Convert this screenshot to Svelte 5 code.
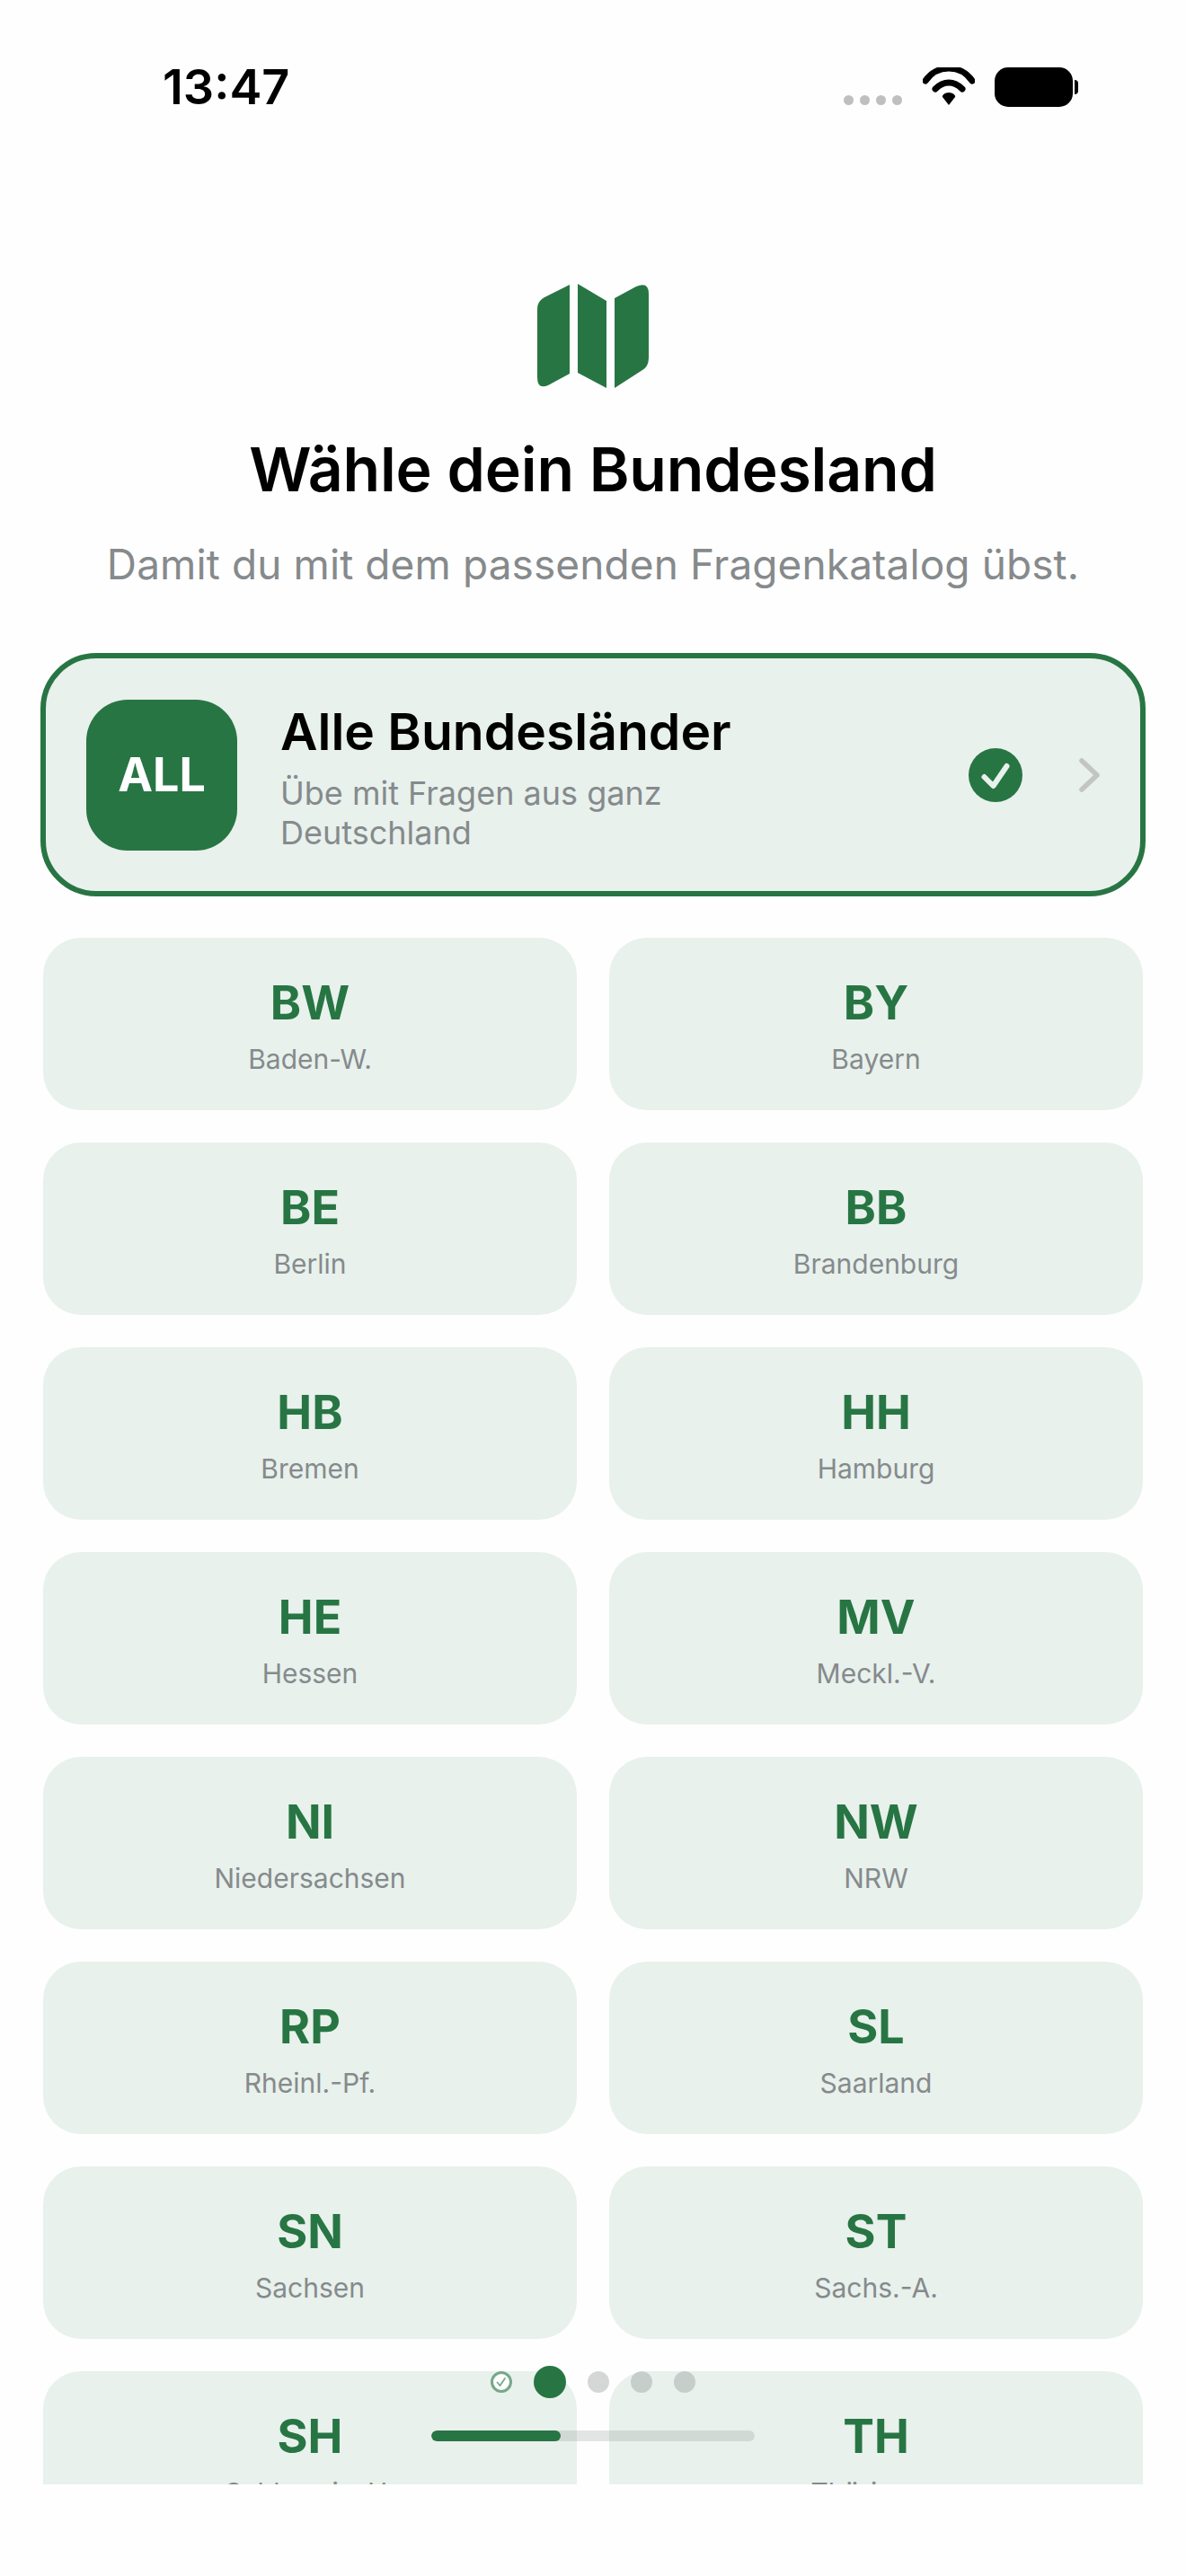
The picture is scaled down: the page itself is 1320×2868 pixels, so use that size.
<script lang="ts">
	const states = [
		['BW', 'Baden-W.'],
		['BY', 'Bayern'],
		['BE', 'Berlin'],
		['BB', 'Brandenburg'],
		['HB', 'Bremen'],
		['HH', 'Hamburg'],
		['HE', 'Hessen'],
		['MV', 'Meckl.-V.'],
		['NI', 'Niedersachsen'],
		['NW', 'NRW'],
		['RP', 'Rheinl.-Pf.'],
		['SL', 'Saarland'],
		['SN', 'Sachsen'],
		['ST', 'Sachs.-A.'],
		['SH', 'Schleswig-H.'],
		['TH', 'Thüringen']
	];
</script>

<div class="screen">
	<div class="status">
		<span class="time">13:47</span>
		<div class="status-icons">
			<div class="signal"><i></i><i></i><i></i><i></i></div>
			<svg class="wifi" viewBox="0 0 58 42" width="58" height="42">
				<path d="M3 15C9 6 19 1 29 1s20 5 26 14" fill="none" stroke="#000" stroke-width="7" stroke-linecap="round" />
				<path d="M14 24c4-4 9-7 15-7s11 3 15 7" fill="none" stroke="#000" stroke-width="7" stroke-linecap="round" />
				<path d="M29 42l-7-9c-1-2 3-5 7-5s8 3 7 5z" fill="#000" />
			</svg>
			<div class="battery"></div>
		</div>
	</div>

	<div class="scroll">
		<header>
			<svg class="map" viewBox="0 0 124 116" width="124" height="116">
				<path d="M36 1V100L12 113Q0 118 0 104V28Q0 19 8 15Z" fill="#287544" />
				<path d="M45 0L77 19V116L45 99Z" fill="#287544" />
				<path d="M86 16L110 3Q124 -3 124 11V82Q124 92 117 96L86 116Z" fill="#287544" />
			</svg>
			<h1>Wähle dein Bundesland</h1>
			<p>Damit du mit dem passenden Fragenkatalog übst.</p>
		</header>

		<div class="all">
			<div class="all-badge">ALL</div>
			<div class="all-text">
				<h2>Alle Bundesländer</h2>
				<span>Übe mit Fragen aus ganz Deutschland</span>
			</div>
			<svg class="check" viewBox="0 0 60 60" width="60" height="60">
				<circle cx="30" cy="30" r="30" fill="#287544" />
				<path d="M17.5 32L27.5 42L42.5 20" fill="none" stroke="#e8f1ec" stroke-width="6" stroke-linecap="round" stroke-linejoin="round" />
			</svg>
			<svg class="chevron" viewBox="0 0 24 38" width="24" height="38">
				<path d="M3 3l17 16L3 35" fill="none" stroke="#c2c5c4" stroke-width="5.5" stroke-linecap="round" stroke-linejoin="round" />
			</svg>
		</div>

		<div class="grid">
			{#each states as [code, name]}
				<div class="card">
					<strong>{code}</strong>
					<span>{name}</span>
				</div>
			{/each}
		</div>
	</div>

	<div class="progress">
		<div class="dots">
			<svg viewBox="0 0 24 24" width="24" height="24">
				<circle cx="12" cy="12" r="10.5" fill="#fff" stroke="#77a78a" stroke-width="3" />
				<path d="M7.5 12.5l3 3.5 5.5-8" fill="none" stroke="#77a78a" stroke-width="1.8" stroke-linecap="round" stroke-linejoin="round" />
			</svg>
			<i class="active"></i>
			<i></i>
			<i></i>
			<i></i>
		</div>
		<div class="bar"><div class="fill" style="width: 40%"></div></div>
	</div>
</div>

<style>
	:global(body) {
		background: #fefefe;
		font-family: Inter, 'Noto Sans', sans-serif;
	}

	.screen {
		position: relative;
		height: 2868px;
		overflow: hidden;
	}

	.status {
		height: 150px;
		padding: 66px 126px 0 181px;
		box-sizing: border-box;
		display: flex;
		justify-content: space-between;
		align-items: flex-start;
	}

	.time {
		font-size: 54px;
		font-weight: 600;
		line-height: 62px;
		color: #000;
	}

	.status-icons {
		display: flex;
		align-items: flex-start;
		padding-top: 9px;
	}

	.signal {
		display: flex;
		gap: 7px;
		margin-top: 31px;
		margin-right: 23px;
	}

	.signal i {
		width: 11px;
		height: 11px;
		border-radius: 50%;
		background: #bfbfbf;
	}

	.wifi {
		margin-right: 22px;
	}

	.battery {
		width: 87px;
		height: 44px;
		border-radius: 15px;
		background: #000;
		position: relative;
	}

	.battery::after {
		content: '';
		position: absolute;
		left: 89px;
		top: 14px;
		width: 4px;
		height: 16px;
		border-radius: 0 4px 4px 0;
		background: #000;
	}

	.scroll {
		height: 2616px;
		overflow: hidden;
	}

	header {
		display: flex;
		flex-direction: column;
		align-items: center;
		padding-top: 166px;
	}

	h1 {
		margin: 48px 0 0;
		font-size: 68px;
		line-height: 84px;
		font-weight: 600;
		letter-spacing: -0.2px;
		color: #000;
	}

	header p {
		margin: 35px 0 0;
		font-size: 46px;
		line-height: 58px;
		letter-spacing: 0.1px;
		color: #868a8c;
	}

	.all {
		margin: 70px 45px 0;
		height: 271px;
		box-sizing: border-box;
		border: 6px solid #287544;
		border-radius: 62px;
		background: #e8f1ec;
		padding: 0 44px 0 45px;
		display: flex;
		align-items: center;
	}

	.all-badge {
		width: 168px;
		height: 168px;
		flex: none;
		border-radius: 46px;
		background: #287544;
		color: #fff;
		display: flex;
		align-items: center;
		justify-content: center;
		font-size: 52px;
		font-weight: 700;
	}

	.all-text {
		flex: 1;
		margin-left: 48px;
		display: flex;
		flex-direction: column;
	}

	.all-text h2 {
		margin: 4px 0 0;
		font-size: 57px;
		line-height: 68px;
		font-weight: 600;
		color: #000;
	}

	.all-text span {
		margin-top: 12px;
		max-width: 520px;
		font-size: 36px;
		line-height: 44px;
		color: #868a8c;
	}

	.check {
		flex: none;
	}

	.chevron {
		flex: none;
		margin-left: 63px;
	}

	.grid {
		margin: 46px 48px 0;
		display: grid;
		grid-template-columns: 1fr 1fr;
		gap: 36px;
	}

	.card {
		height: 192px;
		border-radius: 42px;
		background: #e8f1ec;
		display: flex;
		flex-direction: column;
		align-items: center;
		padding-top: 41px;
		box-sizing: border-box;
	}

	.card strong {
		font-size: 52px;
		line-height: 64px;
		font-weight: 700;
		color: #287544;
	}

	.card span {
		margin-top: 11px;
		font-size: 30px;
		line-height: 38px;
		color: #868a8c;
	}

	.progress {
		position: absolute;
		left: 480px;
		top: 2634px;
		width: 360px;
		display: flex;
		flex-direction: column;
		align-items: center;
		gap: 36px;
	}

	.dots {
		display: flex;
		align-items: center;
		height: 36px;
		gap: 24px;
	}

	.dots svg {
		display: block;
	}

	.dots i {
		width: 24px;
		height: 24px;
		border-radius: 50%;
		background: rgba(120, 125, 125, 0.3);
	}

	.dots i.active {
		width: 36px;
		height: 36px;
		background: #287544;
	}

	.bar {
		width: 100%;
		height: 12px;
		border-radius: 6px;
		background: rgba(120, 125, 125, 0.2);
		overflow: hidden;
	}

	.fill {
		height: 100%;
		border-radius: 6px;
		background: #287544;
	}
</style>
